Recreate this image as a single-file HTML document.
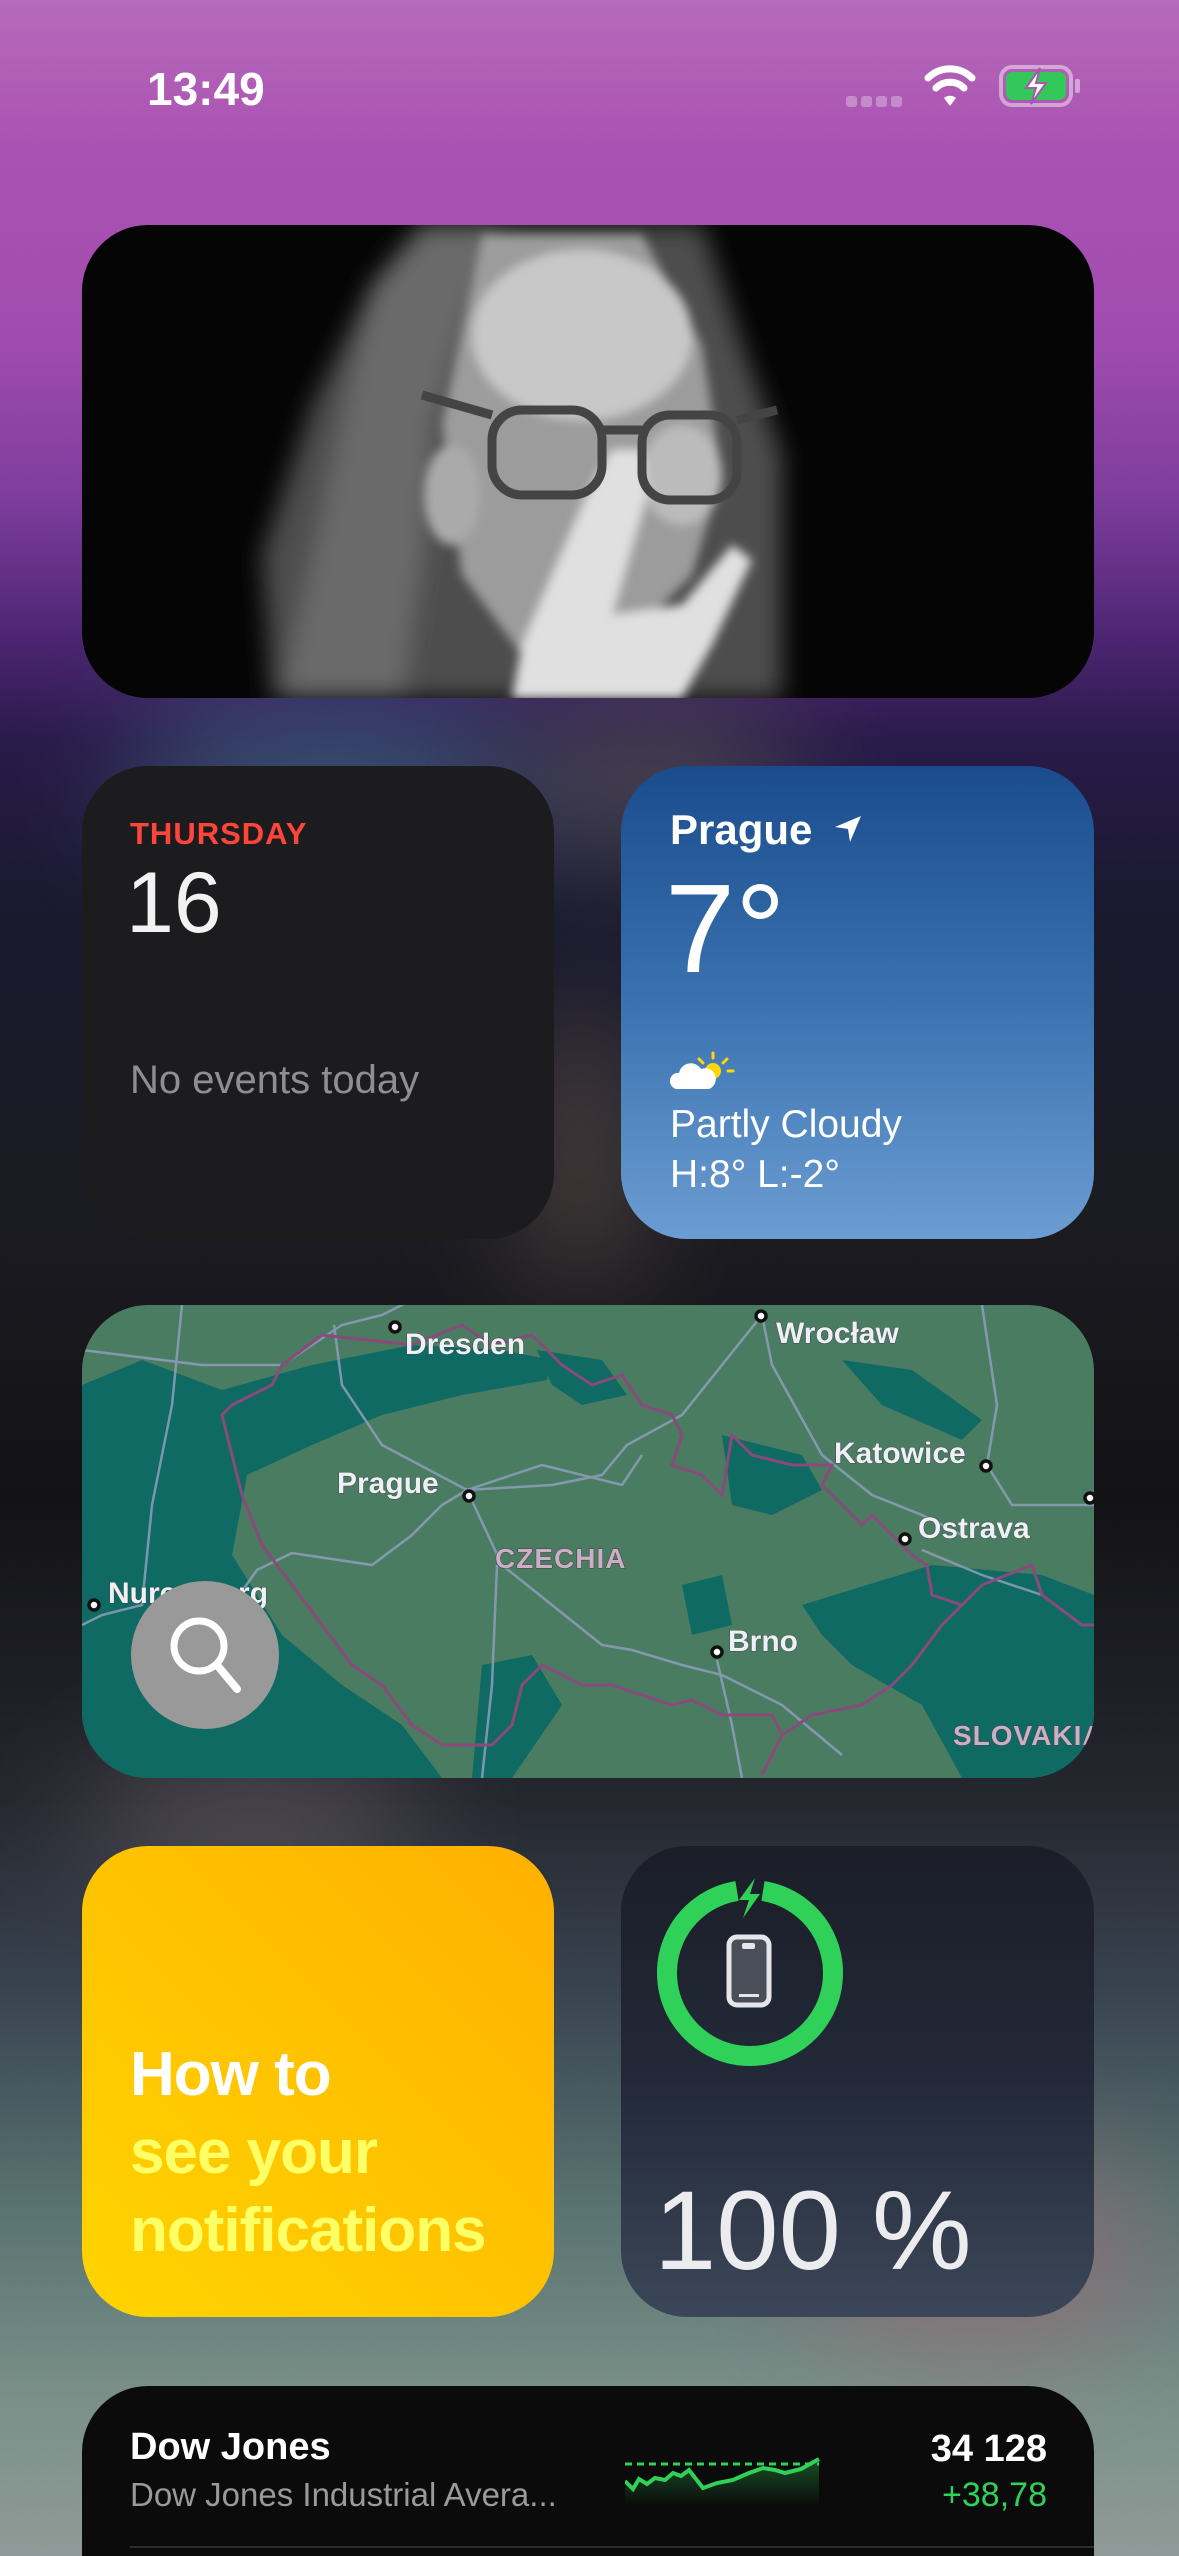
<!DOCTYPE html>
<html><head><meta charset="utf-8">
<style>
*{margin:0;padding:0;box-sizing:border-box}
html,body{width:1179px;height:2556px;overflow:hidden}
body{position:relative;font-family:"Liberation Sans",sans-serif;
background:linear-gradient(180deg,#b66ab9 0px,#aa52b3 150px,#a04cae 340px,#7d3c9c 500px,#4c2572 640px,#2a1a4a 740px,#1a1a30 900px,#1b1b22 1200px,#131316 1500px,#25272f 1800px,#3a4552 2000px,#587270 2200px,#7a9088 2400px,#909a98 2556px);}
.blob{position:absolute;border-radius:50%;filter:blur(60px)}
.w{position:absolute;border-radius:66px;overflow:hidden}
.t{position:absolute;white-space:nowrap;color:#fff}
</style></head><body>
<div class="blob" style="left:120px;top:700px;width:420px;height:160px;background:#3f5f80;opacity:.8"></div>
<div class="blob" style="left:500px;top:700px;width:300px;height:160px;background:#555;opacity:.7"></div>
<div class="blob" style="left:520px;top:1000px;width:120px;height:300px;background:#6a5a50;opacity:.6"></div>
<div class="blob" style="left:80px;top:1750px;width:350px;height:150px;background:#6a5f66;opacity:.6"></div>
<div class="blob" style="left:800px;top:2150px;width:350px;height:200px;background:#9a6a78;opacity:.7"></div>

<div class="t" style="left:147px;top:62px;font-size:46px;font-weight:bold">13:49</div>
<div style="position:absolute;left:846px;top:96px;display:flex;gap:4px">
<div style="width:11px;height:11px;border-radius:3px;background:rgba(255,255,255,.3)"></div>
<div style="width:11px;height:11px;border-radius:3px;background:rgba(255,255,255,.3)"></div>
<div style="width:11px;height:11px;border-radius:3px;background:rgba(255,255,255,.3)"></div>
<div style="width:11px;height:11px;border-radius:3px;background:rgba(255,255,255,.3)"></div></div>
<svg style="position:absolute;left:924px;top:64px" width="52" height="44" viewBox="0 0 52 44">
<path d="M26 42 L32 34 A9 9 0 0 0 20 34 Z" fill="#fff"/>
<path d="M12 24 A20 20 0 0 1 40 24" stroke="#fff" stroke-width="7" fill="none" stroke-linecap="round"/>
<path d="M4 14 A31 31 0 0 1 48 14" stroke="#fff" stroke-width="7" fill="none" stroke-linecap="round"/>
</svg>
<svg style="position:absolute;left:998px;top:64px" width="86" height="44" viewBox="0 0 86 44">
<rect x="3" y="3" width="70" height="38" rx="11" fill="none" stroke="rgba(255,255,255,.45)" stroke-width="4"/>
<rect x="8" y="8" width="60" height="28" rx="7" fill="#34c759"/>
<rect x="77" y="15" width="5" height="14" rx="2" fill="rgba(255,255,255,.45)"/>
<path d="M42 4 L28 24 L38 24 L33 40 L48 19 L38 19 Z" fill="#fff" stroke="#a757b2" stroke-width="2"/>
</svg>

<div class="w" style="left:82px;top:225px;width:1012px;height:473px;background:#050505">
<svg width="1012" height="473" viewBox="0 0 1012 473">
<defs><filter id="b1"><feGaussianBlur stdDeviation="12"/></filter><filter id="b2"><feGaussianBlur stdDeviation="5"/></filter></defs>
<g filter="url(#b1)">
<path d="M190 473 L180 330 L230 180 L290 60 L340 0 L620 0 L660 120 L700 230 L700 473 Z" fill="#4e4e4e"/>
<path d="M290 60 L340 0 L420 0 L380 100 L350 200 L340 330 L320 473 L200 473 Z" fill="#6a6a6a"/>
</g>
<g filter="url(#b2)">
<path d="M400 10 L560 10 L620 120 L640 250 L610 350 L540 420 L440 430 L380 350 L360 200 Z" fill="#9c9c9c"/>
<ellipse cx="500" cy="110" rx="110" ry="85" fill="#c8c8c8"/>
<ellipse cx="600" cy="250" rx="40" ry="50" fill="#bbb"/>
<ellipse cx="370" cy="270" rx="28" ry="50" fill="#aaa"/>
<path d="M530 225 L560 225 L565 270 L530 390 L600 380 L650 320 L670 335 L630 420 L600 473 L430 473 L440 420 L505 270 Z" fill="#e0e0e0"/>
</g>
<g fill="none" stroke="#444" stroke-width="9">
<rect x="410" y="185" width="110" height="85" rx="30"/><rect x="560" y="190" width="95" height="85" rx="28"/>
<path d="M520 205 L560 205 M340 170 L410 190 M655 195 L695 185"/></g>
</svg></div>

<div class="w" style="left:82px;top:766px;width:472px;height:473px;background:#1c1c1e">
<div class="t" style="left:48px;top:50px;font-size:31px;color:#ff453a;font-weight:bold;letter-spacing:1px">THURSDAY</div>
<div class="t" style="left:44px;top:88px;font-size:86px;color:#f2f2f2">16</div>
<div class="t" style="left:48px;top:292px;font-size:40px;color:#8e8e93">No events today</div>
</div>

<div class="w" style="left:621px;top:766px;width:473px;height:473px;background:linear-gradient(180deg,#1a4c8c 0%,#3a72b0 50%,#6c9dd2 100%)">
<div class="t" style="left:49px;top:40px;font-size:42px;font-weight:bold">Prague</div>
<svg style="position:absolute;left:212px;top:48px" width="30" height="30" viewBox="0 0 30 30"><path d="M28 2 L2 13 L15 15 L17 28 Z" fill="#fff"/></svg>
<div class="t" style="left:44px;top:100px;font-size:126px;line-height:1">7°</div>
<svg style="position:absolute;left:48px;top:285px" width="68" height="40" viewBox="0 0 68 40">
<g stroke="#ffd60a" stroke-width="3" stroke-linecap="round"><path d="M44 2v5M58 8l-4 4M64 20h-5M30 8l4 4"/></g>
<circle cx="44" cy="20" r="8" fill="#ffd60a"/>
<path d="M8 38 A8 8 0 0 1 10 22 A12 12 0 0 1 32 18 A9 9 0 0 1 40 38 Z" fill="#fff"/>
</svg>
<div class="t" style="left:49px;top:337px;font-size:39px">Partly Cloudy</div>
<div class="t" style="left:49px;top:387px;font-size:39px">H:8° L:-2°</div>
</div>

<div class="w" style="left:82px;top:1305px;width:1012px;height:473px;background:#4a7c62">
<svg width="1012" height="473" viewBox="0 0 1012 473" font-family="Liberation Sans" font-weight="bold">
<g fill="#0e6a62">
<path d="M0 80 L60 55 L140 85 L230 60 L330 40 L420 45 L470 55 L465 75 L380 90 L300 110 L230 140 L165 170 L150 250 L200 330 L260 380 L320 420 L360 473 L0 473 Z"/>
<path d="M455 45 L520 55 L545 90 L500 100 L470 80 Z"/>
<path d="M760 55 L830 65 L900 115 L880 135 L800 100 Z"/>
<path d="M640 130 L720 150 L740 185 L690 210 L650 200 Z"/>
<path d="M720 300 L850 260 L960 270 L1012 290 L1012 473 L880 473 L840 400 L770 360 L740 330 Z"/>
<path d="M400 360 L450 350 L480 400 L430 473 L390 473 Z"/>
<path d="M600 280 L640 270 L650 320 L610 330 Z"/>
</g>
<g fill="none" stroke="#8f9ebd" stroke-width="2.5" opacity=".85">
<path d="M0 45 L80 55 L120 60 L200 60 L260 20 L300 10 L330 -5"/>
<path d="M252 20 L260 80 L300 140 L385 185 L470 180 L520 170 L545 140 L600 110 L680 10"/>
<path d="M385 185 L360 200 L330 230 L290 260 L210 248 L175 265 L150 300"/>
<path d="M385 185 L420 260 L470 300 L520 340 L550 345 L600 360 L640 370 L700 400 L760 450"/>
<path d="M415 260 L410 380 L400 473"/>
<path d="M635 355 L650 420 L660 473"/>
<path d="M900 0 L915 100 L905 160 L930 200 L1012 200"/>
<path d="M680 10 L690 60 L740 150 L790 190 L840 210 L880 230"/>
<path d="M840 245 L900 270 L960 290"/>
<path d="M100 0 L90 100 L70 200 L60 300 L20 310 L0 320"/>
<path d="M385 185 L460 160 L540 180 L560 150"/>
</g>
<path d="M240 30 L330 40 L380 20 L410 40 L450 30 L480 60 L510 80 L540 70 L560 100 L590 110 L600 130 L590 160 L620 170 L640 190 L650 130 L670 150 L710 160 L750 160 L740 180 L780 220 L790 210 L830 250 L845 260 L850 290 L880 300 L900 280 L950 260 L960 290 L1000 320 L1012 320 M880 300 L860 320 L830 360 L810 380 L780 400 L730 410 L700 430 L680 470 M700 430 L690 410 L640 410 L610 395 L590 400 L530 380 L500 380 L460 360 L440 380 L430 420 L410 440 L360 440 L330 420 L300 380 L270 360 L240 320 L210 280 L180 240 L160 190 L150 150 L140 110 L150 100 L190 80 L200 60 L240 30"
 fill="none" stroke="#8a4a7c" stroke-width="3"/>
<g font-size="30" fill="#eef0f4" stroke="#3a4a50" stroke-width="1" paint-order="stroke">
<text x="323" y="49">Dresden</text>
<text x="694" y="38">Wrocław</text>
<text x="255" y="188">Prague</text>
<text x="752" y="158">Katowice</text>
<text x="836" y="233">Ostrava</text>
<text x="646" y="346">Brno</text>
<text x="26" y="298">Nuremberg</text>
</g>
<g font-size="28" fill="#c9b0c4" stroke="#4a3a48" stroke-width="1" paint-order="stroke" letter-spacing="1">
<text x="413" y="263">CZECHIA</text><text x="871" y="440">SLOVAKIA</text></g>
<g fill="#fff" stroke="#111" stroke-width="3.5">
<circle cx="313" cy="22" r="5"/><circle cx="679" cy="11" r="5"/><circle cx="387" cy="191" r="5"/>
<circle cx="904" cy="161" r="5"/><circle cx="823" cy="234" r="5"/><circle cx="635" cy="347" r="5"/><circle cx="12" cy="300" r="5"/><circle cx="1008" cy="193" r="5"/></g>
<circle cx="123" cy="350" r="74" fill="#999"/>
<circle cx="117" cy="341" r="25" fill="none" stroke="#fff" stroke-width="7"/>
<path d="M135 360 L155 384" stroke="#fff" stroke-width="8" stroke-linecap="round"/>
</svg></div>

<div class="w" style="left:82px;top:1846px;width:472px;height:471px;background:linear-gradient(225deg,#ffb000 0%,#ffc300 50%,#ffd400 100%)">
<div style="position:absolute;left:48px;top:190px;font-size:62px;font-weight:bold;line-height:78px;color:#fff;letter-spacing:-1px">How to<br><span style="color:#ffff66">see your<br>notifications</span></div>
</div>

<div class="w" style="left:621px;top:1846px;width:473px;height:471px;background:linear-gradient(180deg,#1b1e28 0%,#232938 50%,#3b4759 100%)">
<svg style="position:absolute;left:34px;top:32px" width="190" height="190" viewBox="0 0 190 190">
<path d="M108 13 A83 83 0 1 1 82 13" fill="none" stroke="#30d158" stroke-width="20"/>
<path d="M100 0 L84 22 L94 22 L88 40 L105 16 L95 16 Z" fill="#30d158"/>
<rect x="74" y="59" width="40" height="68" rx="8" fill="#4a4e58" stroke="#e5e5ea" stroke-width="5"/>
<rect x="87" y="65" width="13" height="6" rx="2" fill="#e5e5ea"/>
<rect x="84" y="116" width="20" height="3" fill="#e5e5ea"/>
</svg>
<div class="t" style="left:33px;top:320px;font-size:112px;color:#ececee">100 %</div>
</div>

<div class="w" style="left:82px;top:2386px;width:1012px;height:260px;background:#0b0b0b">
<div class="t" style="left:48px;top:40px;font-size:38px;font-weight:bold">Dow Jones</div>
<div class="t" style="left:48px;top:90px;font-size:33px;color:#9a9a9e">Dow Jones Industrial Avera...</div>
<svg style="position:absolute;left:543px;top:70px" width="195" height="50" viewBox="0 0 195 50">
<defs><linearGradient id="cg" x1="0" y1="0" x2="0" y2="1"><stop offset="0" stop-color="#30d158" stop-opacity=".35"/><stop offset="1" stop-color="#30d158" stop-opacity="0"/></linearGradient></defs>
<path d="M0 25 L8 33 L14 23 L22 28 L30 22 L40 24 L48 17 L56 20 L64 14 L78 32 L92 27 L108 24 L124 17 L138 12 L150 14 L160 17 L176 13 L194 3 L194 50 L0 50 Z" fill="url(#cg)"/>
<path d="M0 25 L8 33 L14 23 L22 28 L30 22 L40 24 L48 17 L56 20 L64 14 L78 32 L92 27 L108 24 L124 17 L138 12 L150 14 L160 17 L176 13 L194 3" fill="none" stroke="#30d158" stroke-width="4"/>
<path d="M0 8 L194 8" stroke="#30d158" stroke-width="3" stroke-dasharray="7 5"/>
</svg>
<div class="t" style="right:47px;top:42px;font-size:38px;font-weight:bold">34 128</div>
<div class="t" style="right:47px;top:90px;font-size:34px;color:#30d158">+38,78</div>
<div style="position:absolute;left:48px;right:0;top:160px;height:2px;background:#2c2c2e"></div>
</div>
</body></html>
